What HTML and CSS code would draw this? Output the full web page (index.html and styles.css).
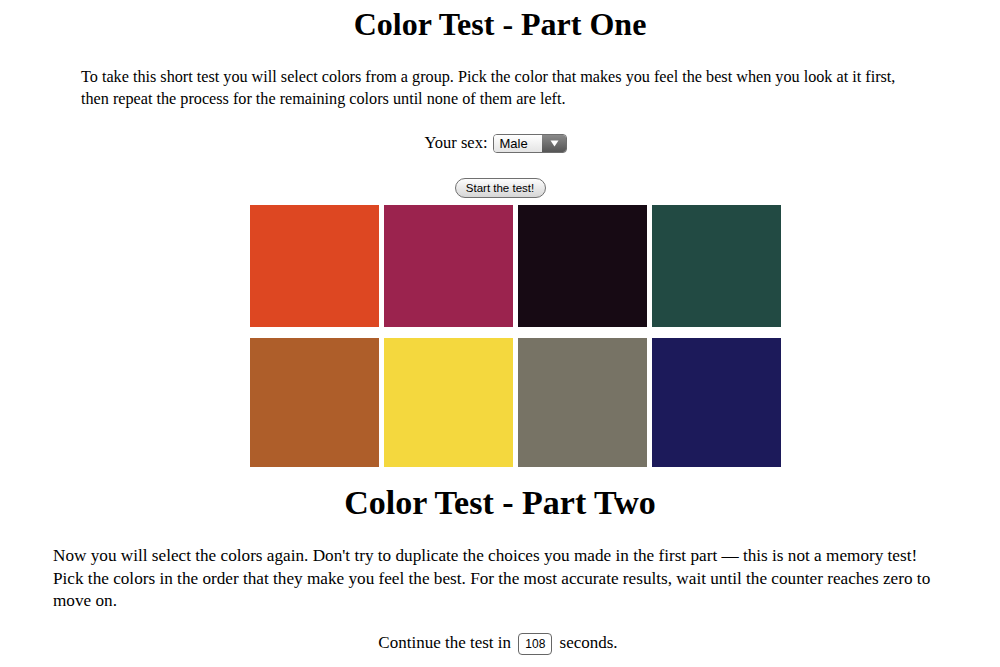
FILE: index.html
```html
<!DOCTYPE html>
<html>
<head>
<meta charset="utf-8">
<link rel="stylesheet" href="styles.css">
</head>
<body>
<section class="part part-one">
  <h1 class="title title-one">Color Test - Part One</h1>
  <p class="intro">To take this short test you will select colors from a group. Pick the color that makes you feel the best when you look at it first, then repeat the process for the remaining colors until none of them are left.</p>
  <div class="sex-row">
    <span class="label">Your sex:</span>
    <span class="select"><span class="select-value">Male</span><span class="select-arrow"><svg width="9" height="7" viewBox="0 0 9 7"><path d="M0.5 0.5 H8.5 L4.5 6.5 Z" fill="#fff"/></svg></span></span>
  </div>
  <div class="start-row"><button class="start-btn">Start the test!</button></div>
  <div class="swatches">
    <div class="swatch row1" style="background:#dd4722"></div>
    <div class="swatch row1" style="background:#9b234e"></div>
    <div class="swatch row1" style="background:#170a14"></div>
    <div class="swatch row1" style="background:#224a43"></div>
    <div class="swatch row2" style="background:#ae5e2a"></div>
    <div class="swatch row2" style="background:#f4d83e"></div>
    <div class="swatch row2" style="background:#777365"></div>
    <div class="swatch row2" style="background:#1c1a5a"></div>
  </div>
</section>
<section class="part part-two">
  <h1 class="title title-two">Color Test - Part Two</h1>
  <p class="intro-two">Now you will select the colors again. Don't try to duplicate the choices you made in the first part — this is not a memory test! Pick the colors in the order that they make you feel the best. For the most accurate results, wait until the counter reaches zero to move on.</p>
  <p class="counter-row">Continue the test in <span class="counter">108</span> seconds.</p>
</section>
</body>
</html>
```
FILE: styles.css
```css
html, body {
  margin: 0;
  padding: 0;
  background: #fff;
}
body {
  font-family: "Liberation Serif", "Times New Roman", serif;
  color: #000;
  width: 1000px;
}
.title {
  margin: 0;
  text-align: center;
  font-weight: bold;
  line-height: 40px;
}
.title-one {
  padding-top: 4px;
  font-size: 32px;
}
.intro {
  margin: 22px 0 0 81px;
  width: 840px;
  font-size: 16.2px;
  line-height: 22px;
}
.sex-row {
  margin-top: 23px;
  display: flex;
  justify-content: center;
  align-items: center;
  gap: 6px;
  font-size: 16.5px;
  height: 20px;
  padding-right: 8px;
}
.select {
  display: inline-flex;
  width: 74px;
  height: 19px;
  border: 1px solid #6e6e6e;
  border-radius: 4px;
  overflow: hidden;
  box-sizing: border-box;
  font-family: "Liberation Sans", Arial, sans-serif;
  font-size: 13px;
}
.select-value {
  flex: 1;
  padding-left: 5px;
  line-height: 18px;
  background: linear-gradient(#ffffff, #e4e4e4);
}
.select-arrow {
  width: 24px;
  display: flex;
  align-items: center;
  justify-content: center;
  background: linear-gradient(#8a8a8a, #555);
}
.start-row {
  margin-top: 25px;
  display: flex;
  justify-content: center;
}
.start-btn {
  width: 91px;
  height: 20px;
  border: 1px solid #707070;
  border-radius: 10px;
  background: linear-gradient(#fdfdfd, #d6d6d6);
  font-family: "Liberation Sans", Arial, sans-serif;
  font-size: 11.5px;
  color: #000;
  padding: 0;
}
.swatches {
  margin: 7px 0 0 250px;
  display: grid;
  grid-template-columns: repeat(4, 129px);
  column-gap: 5px;
  row-gap: 11px;
  width: 532px;
}
.swatch.row1 { height: 122px; }
.swatch.row2 { height: 129px; }
.title-two {
  margin-top: 16px;
  font-size: 34px;
}
.intro-two {
  margin: 22px 0 0 53px;
  width: 890px;
  font-size: 17.2px;
  line-height: 22.5px;
}
.counter-row {
  margin: 19px 0 0;
  text-align: center;
  font-size: 17px;
  line-height: 22px;
  padding-right: 4px;
}
.counter {
  display: inline-block;
  width: 34px;
  height: 22px;
  box-sizing: border-box;
  border: 1px solid #666;
  border-radius: 4px;
  font-family: "Liberation Sans", Arial, sans-serif;
  font-size: 12px;
  line-height: 20px;
  text-align: center;
  vertical-align: middle;
  margin: 0 3px;
}
```
